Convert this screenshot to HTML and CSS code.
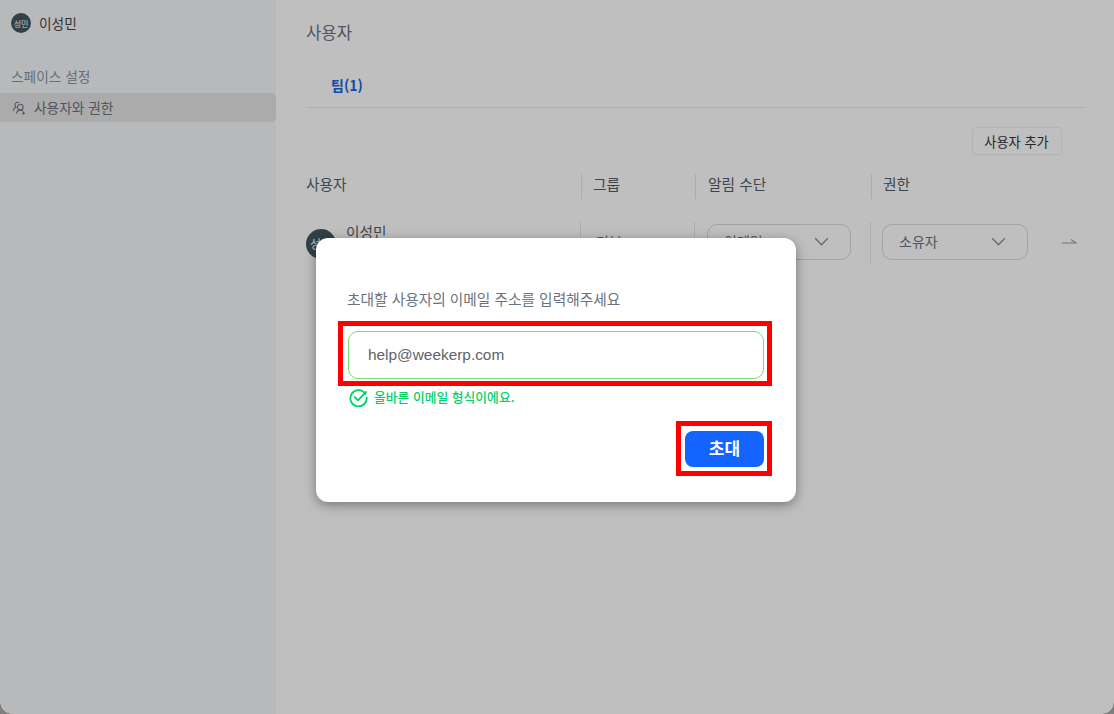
FILE: index.html
```html
<!DOCTYPE html>
<html lang="ko">
<head>
<meta charset="utf-8">
<title>사용자</title>
<link rel="stylesheet" href="styles.css">
</head>
<body>
<div class="app">
  <aside class="sidebar">
    <div class="profile">
      <span class="avatar avatar-small">성민</span>
      <span class="profile-name">이성민</span>
    </div>
    <div class="side-label">스페이스 설정</div>
    <div class="side-item">
      <svg class="side-icon" viewBox="0 0 16 16" fill="none" stroke="#6b7280" stroke-width="1.2" stroke-linecap="round">
        <circle cx="9.5" cy="7" r="3.2"/>
        <path d="M5.2 14c.5-2.3 2.2-3.6 4.3-3.6 1.1 0 2 .3 2.8 1"/>
        <path d="M7.6 1.6A3 3 0 0 0 3.4 4.4c0 1.1.5 1.9 1.2 2.5C3 7.6 1.9 9 1.5 10.8"/>
        <path d="M13.2 12.6v2.6M11.9 13.9h2.6"/>
      </svg>
      <span class="side-text">사용자와 권한</span>
    </div>
  </aside>
  <main class="main">
    <h1 class="title">사용자</h1>
    <nav class="tabs"><span class="tab">팀(1)</span></nav>
    <div class="actions"><button class="add-btn">사용자 추가</button></div>
    <div class="table-row table-head">
      <div class="cell cell-user">사용자</div>
      <div class="cell cell-group">그룹</div>
      <div class="cell cell-notify">알림 수단</div>
      <div class="cell cell-role">권한</div>
    </div>
    <div class="table-row table-body">
      <div class="cell cell-user body-user">
        <span class="avatar avatar-large">성민</span>
        <div class="user-info">
          <div class="user-name">이성민</div>
          <div class="user-mail">help@weekerp.com</div>
        </div>
      </div>
      <div class="cell cell-group group-value"><span class="group-text">기본</span></div>
      <div class="cell cell-notify">
        <div class="select select-notify"><span class="select-text">이메일</span>
          <svg class="chevron" viewBox="0 0 16 10" fill="none" stroke="#8b9094" stroke-width="1.6"><path d="M1 1.5l7 7 7-7"/></svg>
        </div>
      </div>
      <div class="cell cell-role">
        <div class="select select-role"><span class="select-text">소유자</span>
          <svg class="chevron" viewBox="0 0 16 10" fill="none" stroke="#8b9094" stroke-width="1.6"><path d="M1 1.5l7 7 7-7"/></svg>
        </div>
        <svg class="row-arrow" viewBox="0 0 16 6" fill="none" stroke="#9a9da1" stroke-width="1.1"><path d="M1 5h14L10 1.5"/></svg>
      </div>
    </div>
  </main>
</div>
<div class="overlay"></div>
<div class="corner corner-left"></div>
<div class="corner corner-right"></div>
<section class="modal">
  <p class="modal-text">초대할 사용자의 이메일 주소를 입력해주세요</p>
  <div class="field">
    <div class="email-input">help@weekerp.com</div>
    <span class="mark mark-input"></span>
  </div>
  <div class="valid">
    <svg class="valid-icon" viewBox="0 0 20 20" fill="none" stroke="#00d26a" stroke-width="1.9" stroke-linecap="round" stroke-linejoin="round">
      <path d="M17.3 6.2A8.6 8.6 0 1 0 18.6 10"/>
      <path d="M6 9.5l3.5 3.6L18 4.2"/>
    </svg>
    <span class="valid-text">올바른 이메일 형식이에요.</span>
  </div>
  <div class="modal-actions">
    <div class="invite-wrap">
      <button class="invite-btn">초대</button>
      <span class="mark mark-btn"></span>
    </div>
  </div>
</section>
</body>
</html>
```
FILE: styles.css
```css
* { box-sizing: border-box; }
html, body { margin: 0; height: 100%; }
body {
  width: 1114px;
  height: 714px;
  overflow: hidden;
  position: relative;
  background: #fff;
  font-family: "Noto Sans CJK KR", "Noto Sans", sans-serif;
  color: #333;
}
.app { display: flex; height: 714px; }
.sidebar { width: 276px; flex: none; background: #f6f7f9; padding-top: 12px; }
.profile { display: flex; align-items: center; gap: 8px; padding-left: 11px; height: 22px; }
.avatar {
  display: flex; align-items: center; justify-content: center;
  border-radius: 50%; background: #43565f; color: #fff; flex: none;
}
.avatar-small { width: 20px; height: 20px; font-size: 8px; }
.profile-name { font-size: 13.7px; color: #44464a; }
.side-label { margin-top: 32px; padding-left: 11px; font-size: 13.7px; line-height: 20px; color: #8a93a3; }
.side-item {
  display: flex; align-items: center; gap: 8px;
  margin-top: 7px; height: 29px; padding-left: 12px;
  background: #e4e4e4; border-radius: 0 5px 5px 0;
  font-size: 13.7px; color: #6b7280;
}
.side-text { position: relative; top: -1px; }
.side-icon { width: 14px; height: 14px; flex: none; }
.main { flex: 1; padding: 21px 28px 0 30px; }
.title { margin: 0; font-size: 16.7px; line-height: 23px; font-weight: 400; color: #6b7280; }
.tabs { margin-top: 20px; height: 44px; border-bottom: 1px solid #ececec; padding: 8px 0 0 25px; }
.tab { font-size: 14px; line-height: 20px; font-weight: 700; color: #1464e6; }
.actions { display: flex; justify-content: flex-end; padding: 19px 24px 0 0; }
.add-btn {
  width: 90px; height: 28px; padding: 0 1px 0 0;
  background: #fff; border: 1px solid #efefef; border-radius: 4px;
  font: 400 13.2px "Noto Sans CJK KR", sans-serif; color: #333;
}
.table-row { display: flex; }
.table-head { margin-top: 19px; height: 25px; font-size: 14.7px; line-height: 20px; color: #555c66; }
.table-body { margin-top: 23px; height: 43px; font-size: 14px; }
.cell { display: flex; align-items: center; }
.cell-user { width: 275px; }
.body-user { width: 274px; }
.cell-group { width: 114px; padding-left: 11px; border-left: 1px solid #e6e6e6; }
.cell-notify { width: 176px; padding-left: 12px; border-left: 1px solid #e6e6e6; }
.cell-role { padding-left: 11px; border-left: 1px solid #e6e6e6; position: relative; }
.table-head .cell { padding-bottom: 6px; }
.avatar-large { width: 30px; height: 30px; font-size: 12px; }
.user-info { margin-left: 10px; align-self: flex-start; }
.user-name { font-size: 14.7px; line-height: 20px; color: #555c66; }
.user-mail { font-size: 12px; line-height: 18px; color: #8a93a3; }
.group-value { color: #6b7280; }
.group-text { position: relative; left: 4px; top: -3px; }
.select {
  display: flex; align-items: center; justify-content: space-between;
  height: 36px; padding: 0 21px 0 16px; margin-bottom: 4px;
  border: 1px solid #d6d8da; border-radius: 10px;
  font-size: 14px; color: #6b7280;
}
.select-text { position: relative; top: -1px; }
.select-notify { width: 144px; }
.select-role { width: 146px; }
.chevron { width: 15px; height: 9px; }
.row-arrow { width: 16px; height: 6px; margin-left: 33px; margin-bottom: 6px; }
.overlay { position: absolute; inset: 0; background: rgba(0, 0, 0, .25); }
.corner { position: absolute; bottom: 0; width: 12px; height: 12px; }
.corner-left { left: 0; background: radial-gradient(circle at 100% 0, transparent 11.5px, #808080 12px); }
.corner-right { right: 0; background: radial-gradient(circle at 0 0, transparent 11.5px, #808080 12px); }
.modal {
  position: absolute; left: 316px; top: 238px;
  width: 480px; height: 264px; padding: 51px 32px 0 32px;
  background: #fff; border-radius: 12px;
  box-shadow: 0 3px 12px rgba(0, 0, 0, .38);
}
.modal-text { margin: 0 0 0 -1px; font-size: 14.7px; line-height: 20px; color: #6b7280; }
.field { position: relative; margin-top: 22px; }
.email-input {
  height: 48px; padding: 0 0 0 19px;
  display: flex; align-items: center;
  border: 1px solid #79dc79; border-radius: 10px;
  font: 400 15.4px "Liberation Sans", Arial, sans-serif; color: #5f6368;
}
.mark { position: absolute; border: 5px solid #ff0000; pointer-events: none; }
.mark-input { left: -10px; right: -8px; top: -10px; bottom: -7px; }
.valid { display: flex; align-items: center; gap: 6px; margin: 9px 0 0 1px; height: 18px; font-size: 12.8px; font-weight: 500; color: #00d26a; }
.valid-text { position: relative; top: -1px; }
.valid-icon { width: 19px; height: 19px; flex: none; }
.modal-actions { display: flex; justify-content: flex-end; margin-top: 25px; }
.invite-wrap { position: relative; }
.invite-btn {
  display: block; width: 79px; height: 36px; padding: 0 0 4px;
  border: 0; border-radius: 8px; background: #1464ff;
  font: 700 17px "Noto Sans CJK KR", sans-serif; color: #fff;
}
.mark-btn { left: -9px; right: -8px; top: -10px; bottom: -9px; }
```
